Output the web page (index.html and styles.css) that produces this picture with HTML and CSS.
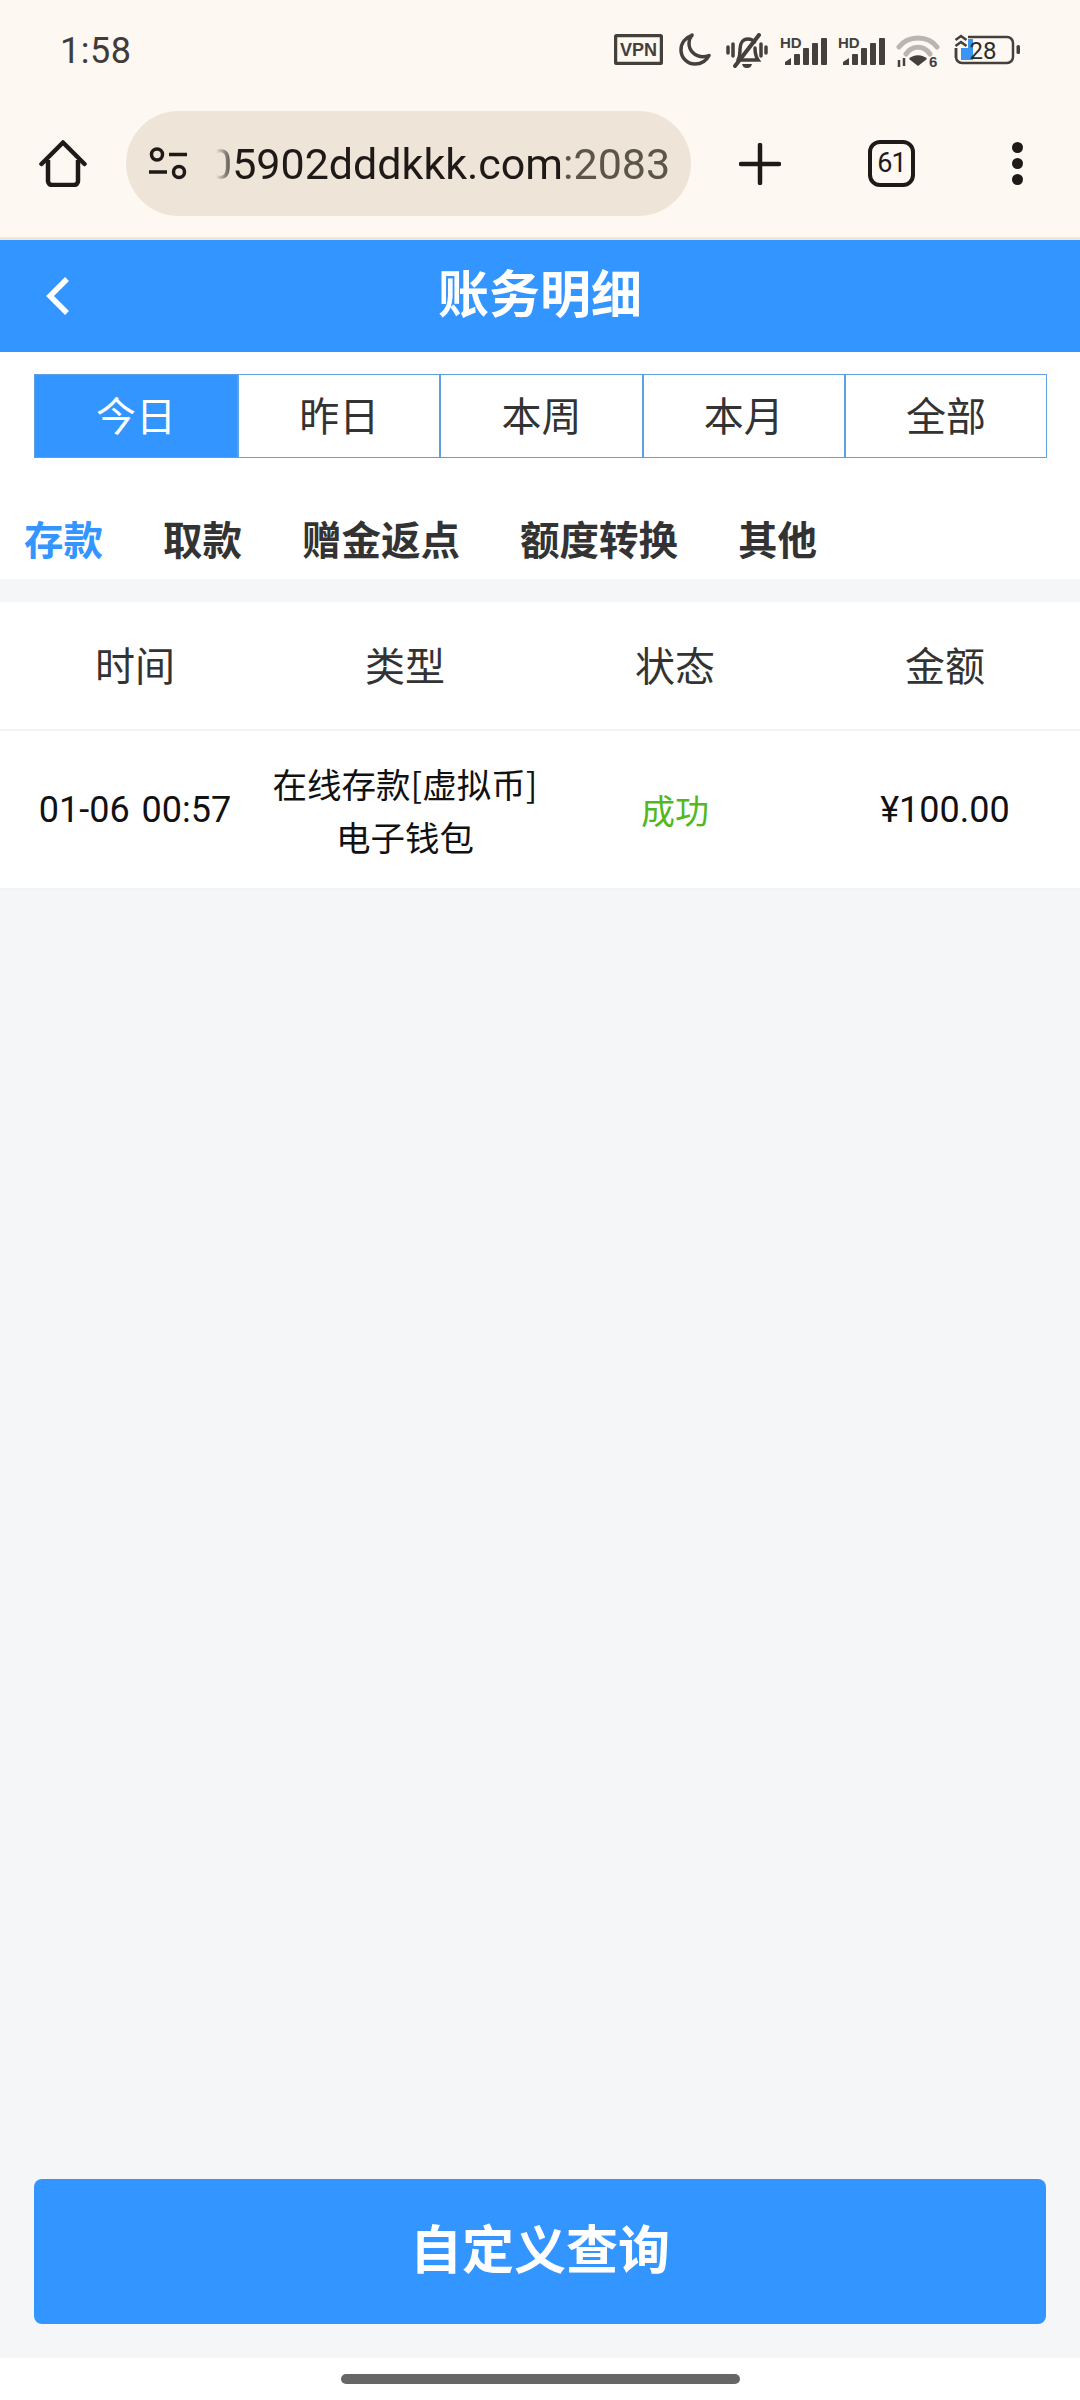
FILE: index.html
```html
<!DOCTYPE html>
<html lang="zh-CN">
<head>
<meta charset="utf-8">
<title>账务明细</title>
<link rel="stylesheet" href="styles.css">
</head>
<body>
<div class="phone">
  <header class="chrome">
    <div class="status">
      <span class="clock">1:58</span>
      <div class="status-icons">
        <svg class="i-vpn" viewBox="0 0 49 31"><rect x="1.500" y="1.500" width="46" height="28" rx="2" fill="none" stroke="#45403c" stroke-width="3.500"/><text x="24.500" y="22" text-anchor="middle" class="vpn-text">VPN</text></svg>
        <svg class="i-moon" viewBox="0 0 32 33"><path d="M13 2.500C6.500 4.500 2 10 2 17c0 8 6.500 14 14 14 6.500 0 11.500-3.500 14-8.500-2 1-4 1.300-6 1.300-8 0-14-6-14-13.500 0-3 1-5.700 3-8.300z" fill="none" stroke="#45403c" stroke-width="3.500" stroke-linejoin="round"/></svg>
        <svg class="i-bell" viewBox="0 0 42 36"><g fill="none" stroke="#45403c" stroke-width="3.500" stroke-linecap="round"><path d="M2 14v6M7 11v12M35 11v12M40 14v6"/><path d="M12 27c2-3 2-6 2-11 0-6 3-10 8-10 3 0 5 1 6.500 3M29 15c0 6 1 9 3 12H12"/><path d="M9 33L33 2" stroke-width="4"/></g><path d="M16 31h10c-1 3-2 4-5 4s-4-1-5-4z" fill="#45403c"/></svg>
        <svg class="i-signal" viewBox="0 -2 47 32"><text x="0" y="12" class="hd-text">HD</text><g fill="#45403c"><path d="M5 29v-3l6-4v7z"/><rect x="14" y="18" width="6" height="11" rx="1"/><rect x="23" y="12" width="6" height="17" rx="1"/><rect x="32" y="7" width="6" height="22" rx="1"/><rect x="41" y="2" width="6" height="27" rx="1"/></g></svg>
        <svg class="i-signal" viewBox="0 -2 47 32"><text x="0" y="12" class="hd-text">HD</text><g fill="#45403c"><path d="M5 29v-3l6-4v7z"/><rect x="14" y="18" width="6" height="11" rx="1"/><rect x="23" y="12" width="6" height="17" rx="1"/><rect x="32" y="7" width="6" height="22" rx="1"/><rect x="41" y="2" width="6" height="27" rx="1"/></g></svg>
        <svg class="i-wifi" viewBox="0 0 44 37"><g fill="none" stroke-linecap="round" stroke="#b9b5b0" stroke-width="5"><path d="M3 13C12 1 32 1 41 13"/><path d="M10 20C16 11 28 11 34 20"/></g><path d="M13 25c4-5 14-5 18 0l-9 7z" fill="#45403c"/><path d="M3 26v7M8 24v8" stroke="#45403c" stroke-width="2.500" fill="none"/><text x="33" y="33" class="six-text">6</text></svg>
        <svg class="i-battery" viewBox="0 0 66 34"><rect x="2" y="4" width="57" height="26" rx="6" fill="none" stroke="#45403c" stroke-width="2.500"/><path d="M7 6h12v21H7z" fill="#3a96f5"/><rect x="0" y="0" width="14" height="15" fill="#fdf8f2"/><path d="M1.500 7l5.500-4 5.500 4M1.500 13l5.500-4 5.500 4" fill="none" stroke="#45403c" stroke-width="2.500"/><path d="M7 15h12v12H7z" fill="#3a96f5"/><path d="M2 15v10" stroke="#45403c" stroke-width="2.500"/><rect x="62.500" y="12" width="3.500" height="9" rx="1.500" fill="#45403c"/><text x="29" y="26" text-anchor="middle" class="batt-text">28</text></svg>
      </div>
    </div>
    <div class="toolbar">
      <svg class="i-home" viewBox="0 0 48 47"><path d="M24 2.500L2.500 24M24 2.500L45.500 24" fill="none" stroke="#1f1a17" stroke-width="4.500" stroke-linecap="round"/><path d="M9 20v21a4 4 0 0 0 4 4h22a4 4 0 0 0 4-4V20" fill="none" stroke="#1f1a17" stroke-width="4.500"/></svg>
      <div class="address">
        <svg class="i-sliders" viewBox="0 0 40 33"><g fill="none" stroke="#1f1a17" stroke-width="3.500"><circle cx="9" cy="7.500" r="5.500"/><circle cx="31" cy="25" r="5.500"/></g><path d="M21 7.500h18M1 25h18" stroke="#1f1a17" stroke-width="3.500"/></svg>
        <div class="url"><span class="url-host">05902dddkkk.com</span><span class="url-port">:2083</span></div>
      </div>
      <svg class="i-plus" viewBox="0 0 42 42"><path d="M21 2v38M2 21h38" stroke="#1f1a17" stroke-width="4.500" stroke-linecap="round"/></svg>
      <div class="tabs-count">61</div>
      <div class="overflow"><i></i><i></i><i></i></div>
    </div>
  </header>

  <div class="appbar">
    <svg class="i-back" viewBox="0 0 24 40"><path d="M21 3L4 20l17 17" fill="none" stroke="#fff" stroke-width="5.500"/></svg>
    <h1 class="appbar-title">账务明细</h1>
  </div>

  <section class="filters">
    <div class="ranges">
      <div class="range is-active">今日</div>
      <div class="range">昨日</div>
      <div class="range">本周</div>
      <div class="range">本月</div>
      <div class="range">全部</div>
    </div>
    <nav class="kinds">
      <span class="kind is-active">存款</span>
      <span class="kind">取款</span>
      <span class="kind">赠金返点</span>
      <span class="kind">额度转换</span>
      <span class="kind">其他</span>
    </nav>
  </section>

  <main class="content">
    <div class="ledger">
      <div class="ledger-head">
        <div>时间</div><div>类型</div><div>状态</div><div>金额</div>
      </div>
      <div class="ledger-row">
        <div class="cell-num">01-06 00:57</div>
        <div>在线存款[虚拟币]<br>电子钱包</div>
        <div class="cell-ok">成功</div>
        <div class="cell-num">¥100.00</div>
      </div>
    </div>
    <button class="query" type="button">自定义查询</button>
  </main>

  <footer class="navbar"><span class="nav-pill"></span></footer>
</div>
</body>
</html>
```

FILE: styles.css
```css
* { box-sizing: border-box; }

html, body { margin: 0; padding: 0; }

body {
  font-family: Roboto, "Noto Sans CJK SC", sans-serif;
  background: #fff;
}

.phone {
  width: 1080px;
  height: 2400px;
  display: flex;
  flex-direction: column;
  overflow: hidden;
}

/* Browser chrome */
.chrome {
  height: 240px;
  background: #fdf8f2;
  border-bottom: 3px solid #efe6da;
  flex: none;
}

.status {
  height: 111px;
  display: flex;
  align-items: flex-start;
  padding: 29px 60px 0 60px;
}

.clock {
  font-size: 36px;
  line-height: 44px;
  color: #413c39;
  letter-spacing: 0.5px;
}

.status-icons {
  margin-left: auto;
  display: flex;
  align-items: flex-start;
  padding-top: 4px;
}

.status-icons svg { display: block; flex: none; }

.i-vpn { width: 49px; height: 31px; margin-right: 16px; margin-top: 1px; }
.i-moon { width: 32px; height: 33px; margin-right: 15px; }
.i-bell { width: 42px; height: 36px; margin-right: 12px; }
.i-signal { width: 47px; height: 32px; margin-right: 11px; margin-top: 1px; }
.i-wifi { width: 44px; height: 37px; margin-right: 14px; margin-top: 1px; }
.i-battery { width: 66px; height: 34px; }

.vpn-text { font: 700 18px "Liberation Sans", sans-serif; fill: #45403c; }
.hd-text { font: 700 15px "Liberation Sans", sans-serif; fill: #45403c; }
.six-text { font: 700 15px "Liberation Sans", sans-serif; fill: #45403c; }
.batt-text { font: 400 24px Roboto, sans-serif; fill: #2f2b28; }

.toolbar {
  height: 105px;
  display: flex;
  align-items: center;
  padding-left: 39px;
}

.toolbar > * { flex: none; }

.i-home { width: 48px; height: 47px; display: block; }

.address {
  width: 565px;
  height: 105px;
  margin-left: 39px;
  border-radius: 53px;
  background: #eee5d8;
  display: flex;
  align-items: center;
  padding: 0 22px;
}

.i-sliders { width: 40px; height: 33px; flex: none; }

.url {
  margin-left: 20px;
  font-size: 43px;
  line-height: 50px;
  white-space: nowrap;
  overflow: hidden;
  flex: 1;
  color: #1f1a17;
  -webkit-mask-image: linear-gradient(90deg, transparent 8px, #000 28px);
  mask-image: linear-gradient(90deg, transparent 8px, #000 28px);
}

.url-port { color: #5c5548; }

.i-plus { width: 42px; height: 42px; margin-left: 48px; display: block; }

.tabs-count {
  width: 47px;
  height: 47px;
  margin-left: 87px;
  border: 4.500px solid #1f1a17;
  border-radius: 12px;
  font-size: 27px;
  line-height: 38px;
  text-align: center;
  letter-spacing: -1px;
  color: #1f1a17;
}

.overflow {
  margin-left: 97px;
  display: flex;
  flex-direction: column;
  gap: 5px;
}

.overflow i {
  width: 11px;
  height: 11px;
  border-radius: 50%;
  background: #1f1a17;
}

/* App header */
.appbar {
  height: 112px;
  flex: none;
  background: #3395ff;
  display: flex;
  align-items: center;
  justify-content: center;
  padding-bottom: 10px;
  position: relative;
}

.i-back {
  position: absolute;
  left: 46px;
  top: 36px;
  width: 24px;
  height: 40px;
}

.appbar-title {
  margin: 0;
  font: 700 51px/1 "Noto Sans CJK SC", sans-serif;
  color: #fff;
}

/* Filter rows */
.filters {
  height: 227px;
  flex: none;
  background: #fff;
  padding: 22px 0 0;
}

.ranges {
  margin: 0 33px 0 34px;
  height: 84px;
  display: grid;
  grid-template-columns: repeat(5, 1fr);
  border: 1px solid #5f9fe3;
}

.range {
  display: flex;
  align-items: center;
  justify-content: center;
  padding-bottom: 5px;
  font: 400 40px/1 "Noto Sans CJK SC", sans-serif;
  color: #333;
  border-left: 2px solid #5f9fe3;
}

.range:first-child { border-left: 0; }

.range.is-active {
  background: #3395ff;
  color: #fff;
}

.kinds {
  display: flex;
  gap: 60px;
  padding: 52px 0 0 24px;
}

.kind {
  font: 700 39.500px/56px "Noto Sans CJK SC", sans-serif;
  color: #333;
}

.kind.is-active { color: #3395ff; }

/* Ledger table and query button */
.content {
  flex: 1;
  background: #f5f6f8;
  padding-top: 23px;
  display: flex;
  flex-direction: column;
}

.ledger { background: #fff; }

.ledger-head,
.ledger-row {
  display: grid;
  grid-template-columns: repeat(4, 1fr);
  text-align: center;
  align-items: center;
}

.ledger-head {
  height: 129px;
  padding-bottom: 3px;
  font: 400 40px/1 "Noto Sans CJK SC", sans-serif;
  color: #333;
  border-bottom: 2px solid #f2f3f5;
}

.ledger-row {
  height: 159px;
  font: 400 34.500px/53px "Noto Sans CJK SC", sans-serif;
  color: #111;
  border-bottom: 2px solid #f2f3f5;
}

.cell-num {
  font-family: Roboto, "Noto Sans CJK SC", sans-serif;
  font-size: 36px;
  word-spacing: 3px;
  padding-top: 2px;
}

.cell-ok {
  color: #52b81e;
  font-size: 34px;
}

.query {
  margin: auto 34px 34px;
  height: 145px;
  flex: none;
  border: 0;
  border-radius: 8px;
  background: #3395ff;
  color: #fff;
  font: 700 52px/1 "Noto Sans CJK SC", sans-serif;
  padding: 0 0 10px;
}

/* Gesture area */
.navbar {
  height: 42px;
  flex: none;
  background: #fff;
  display: flex;
  justify-content: center;
  padding-top: 16px;
}

.nav-pill {
  width: 399px;
  height: 10px;
  border-radius: 5px;
  background: #666;
}
```
